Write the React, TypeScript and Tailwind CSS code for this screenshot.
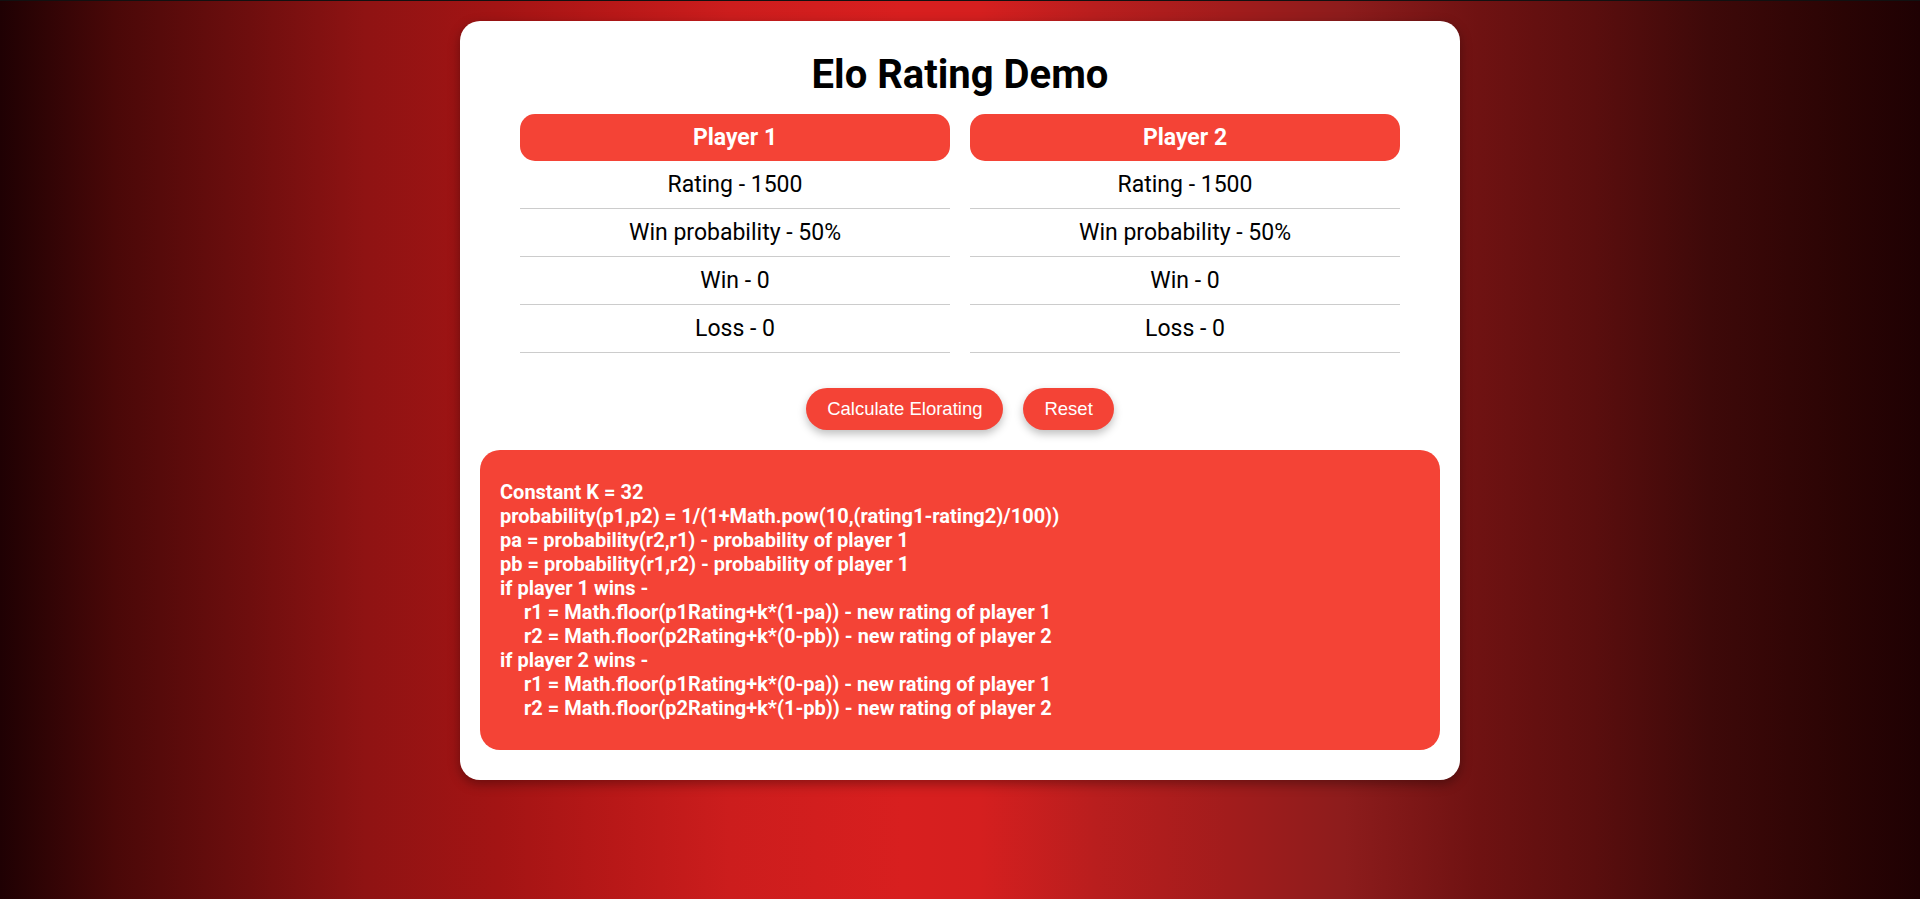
import React from "react";

interface PlayerInfo {
  name: string;
  rating: number;
  prob: number;
  win: number;
  loss: number;
}

const players: PlayerInfo[] = [
  { name: "Player 1", rating: 1500, prob: 50, win: 0, loss: 0 },
  { name: "Player 2", rating: 1500, prob: 50, win: 0, loss: 0 },
];

const formula: { text: string; indent?: boolean }[] = [
  { text: "Constant K = 32" },
  { text: "probability(p1,p2) = 1/(1+Math.pow(10,(rating1-rating2)/100))" },
  { text: "pa = probability(r2,r1) - probability of player 1" },
  { text: "pb = probability(r1,r2) - probability of player 1" },
  { text: "if player 1 wins -" },
  { text: "r1 = Math.floor(p1Rating+k*(1-pa)) - new rating of player 1", indent: true },
  { text: "r2 = Math.floor(p2Rating+k*(0-pb)) - new rating of player 2", indent: true },
  { text: "if player 2 wins -" },
  { text: "r1 = Math.floor(p1Rating+k*(0-pa)) - new rating of player 1", indent: true },
  { text: "r2 = Math.floor(p2Rating+k*(1-pb)) - new rating of player 2", indent: true },
];

function PlayerColumn({ p }: { p: PlayerInfo }) {
  const rows = [
    `Rating - ${p.rating}`,
    `Win probability - ${p.prob}%`,
    `Win - ${p.win}`,
    `Loss - ${p.loss}`,
  ];
  return (
    <div className="flex flex-col">
      <div className="h-[47px] rounded-[15px] bg-[#f44336] text-white font-bold text-[23px] leading-[47px] text-center">
        {p.name}
      </div>
      {rows.map((r) => (
        <div
          key={r}
          className="py-[10px] border-b border-[#cccccc] text-[23px] leading-[27px] text-center text-black"
        >
          {r}
        </div>
      ))}
    </div>
  );
}

export default function App() {
  return (
    <div
      className="min-h-screen w-full border-t border-[#111] bg-[linear-gradient(to_right,#1f0103_0%,#4a0808_6%,#6e0e0e_13%,#8f1313_19%,#a31414_26%,#b81818_32%,#cc1d1d_38%,#d81f1f_47%,#d51f1f_51%,#b91e1e_57%,#a21c1c_64%,#8d1c1c_70%,#6f1212_77%,#5a0e0e_83%,#3e0909_89%,#2a0404_96%,#1f0103_100%)] pt-5 pb-10"
      style={{ fontFamily: "Roboto, 'Noto Sans', sans-serif" }}
    >
      <div className="mx-auto w-[1000px] rounded-[20px] bg-white px-5 pt-[30px] pb-[30px] shadow-[0_4px_12px_rgba(0,0,0,0.35)]">
        <h1 className="text-[40px] leading-[47px] font-bold text-center text-black mb-4">
          Elo Rating Demo
        </h1>
        <div className="mx-10 grid grid-cols-2 gap-5">
          {players.map((p) => (
            <PlayerColumn key={p.name} p={p} />
          ))}
        </div>
        <div
          className="mt-[35px] flex justify-center gap-5"
          style={{ fontFamily: "'Liberation Sans', Arial, sans-serif" }}
        >
          <button className="h-[42px] px-[21px] rounded-full bg-[#f44336] text-white text-[18.5px] shadow-[0_4px_8px_rgba(0,0,0,0.25)]">
            Calculate Elorating
          </button>
          <button className="h-[42px] px-[21px] rounded-full bg-[#f44336] text-white text-[18.5px] shadow-[0_4px_8px_rgba(0,0,0,0.25)]">
            Reset
          </button>
        </div>
        <div className="mt-5 rounded-[20px] bg-[#f44336] px-5 py-[30px] text-white font-bold text-[20px] leading-[24px]">
          {formula.map((l, i) => (
            <div key={i} className={l.indent ? "pl-6" : ""}>
              {l.text}
            </div>
          ))}
        </div>
      </div>
    </div>
  );
}
